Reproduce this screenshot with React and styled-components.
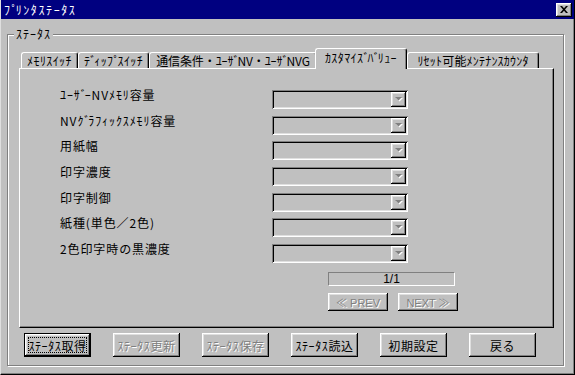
import React from "react";
import styled, { createGlobalStyle, css } from "styled-components";

const Global = createGlobalStyle`
  html, body { margin: 0; padding: 0; background: #c0c0c0; }
  body { font-family: "Noto Sans CJK JP", "Noto Sans", sans-serif; font-size: 12px; color: #000; }
  * { box-sizing: border-box; }
`;

const raised = css`
  box-shadow: inset -1px -1px 0 #000, inset 1px 1px 0 #fff, inset -2px -2px 0 #808080, inset 2px 2px 0 #dfdfdf;
`;

const Window = styled.div`
  width: 575px;
  height: 375px;
  background: #c0c0c0;
  border-left: 1px solid #dfdfdf;
  border-right: 1px solid #000;
  border-bottom: 1px solid #000;
  box-shadow: inset -1px -1px 0 #808080;
  display: flex;
  flex-direction: column;
`;

const TitleBar = styled.div`
  height: 19px;
  background: #000080;
  color: #fff;
  display: flex;
  align-items: center;
  justify-content: space-between;
  padding: 0 2px 0 3px;
  font-size: 12px;
  letter-spacing: 1.6px;
`;

const CloseButton = styled.div`
  width: 16px;
  height: 14px;
  background: #c0c0c0;
  ${raised};
  display: flex;
  align-items: center;
  justify-content: center;
`;

const Client = styled.div`
  flex: 1;
  display: flex;
  padding: 15px 10px 8px 6px;
`;

const GroupBox = styled.div`
  position: relative;
  flex: 1;
  border: 1px solid #808080;
  box-shadow: inset 1px 1px 0 #fff, 1px 1px 0 #fff;
  padding: 13px 9px 7px 11px;
  display: flex;
  flex-direction: column;
`;

const GroupLabel = styled.span`
  position: absolute;
  top: -9px;
  left: 6px;
  padding: 0 2px;
  background: #c0c0c0;
  line-height: 16px;
  letter-spacing: 1px;
`;

const Mark = styled.span`
  letter-spacing: -2px;
`;

const kana = (text) =>
  text.split(/([ﾞﾟ])/).map((part, i) =>
    part === "ﾞ" || part === "ﾟ" ? <Mark key={i}>{part}</Mark> : part
  );

const TabRow = styled.div`
  height: 20px;
  display: flex;
  align-items: flex-end;
  padding-left: 2px;
  position: relative;
  z-index: 1;
`;

const Tab = styled.div`
  width: ${(p) => p.$w}px;
  height: ${(p) => (p.$active ? 21 : 16)}px;
  margin-bottom: ${(p) => (p.$active ? -1 : 0)}px;
  margin-left: ${(p) => (p.$active ? -2 : 0)}px;
  background: #c0c0c0;
  border-top: 1px solid #fff;
  border-left: 1px solid #fff;
  border-right: 1px solid #000;
  border-radius: 3px 3px 0 0;
  box-shadow: inset -1px 0 0 #808080;
  display: flex;
  align-items: ${(p) => (p.$active ? "flex-start" : "center")};
  padding-top: ${(p) => (p.$active ? 2 : 0)}px;
  justify-content: center;
  white-space: nowrap;
  letter-spacing: ${(p) => p.$ls}px;
  line-height: 14px;
`;

const Panel = styled.div`
  height: 260px;
  border: 1px solid;
  border-color: #fff #000 #000 #fff;
  box-shadow: inset -1px -1px 0 #808080;
  padding: 19px 0 0 40px;
`;

const FieldGrid = styled.div`
  display: grid;
  grid-template-columns: 212px 136px;
  grid-auto-rows: 25.67px;
`;

const Label = styled.div`
  line-height: 14px;
  letter-spacing: 0.9px;
  white-space: nowrap;
`;

const Combo = styled.div`
  margin-top: 2px;
  height: 19px;
  background: #c0c0c0;
  box-shadow: inset 1px 1px 0 #808080, inset -1px -1px 0 #fff, inset 2px 2px 0 #000, inset -2px -2px 0 #dfdfdf;
  display: flex;
  justify-content: flex-end;
  padding: 2px;
`;

const ComboArrow = styled.div`
  width: 15px;
  height: 15px;
  ${raised};
  display: flex;
  align-items: center;
  justify-content: center;
`;

const Pager = styled.div`
  margin: 4px 0 0 268px;
  width: 130px;
  display: flex;
  flex-direction: column;
`;

const PageBox = styled.div`
  width: 127px;
  height: 14px;
  border: 1px solid;
  border-color: #808080 #fff #fff #808080;
  display: flex;
  align-items: center;
  justify-content: center;
  line-height: 12px;
  font-size: 12px;
  font-family: "Liberation Sans", "Noto Sans CJK JP", sans-serif;
`;

const PagerButtons = styled.div`
  margin-top: 7px;
  display: flex;
  gap: 10px;
`;

const disabledText = css`
  color: #808080;
  text-shadow: 1px 1px 0 #fff;
`;

const SmallButton = styled.div`
  width: 60px;
  height: 18px;
  ${raised};
  display: flex;
  align-items: center;
  justify-content: center;
  font-family: "Liberation Sans", "Noto Sans CJK JP", sans-serif;
  font-size: 11px;
  ${(p) => p.$disabled && disabledText};
`;

const ButtonRow = styled.div`
  margin-top: 5px;
  padding-left: 5px;
  display: flex;
  gap: 22px;
`;

const Button = styled.div`
  width: 67px;
  height: 24px;
  display: flex;
  align-items: center;
  justify-content: center;
  letter-spacing: 0.6px;
  white-space: nowrap;
  ${raised};
  ${(p) => p.$disabled && disabledText};
  ${(p) =>
    p.$focused &&
    css`
      border: 1px solid #000;
      outline: 1px dotted #000;
      outline-offset: -5px;
    `};
`;

const XIcon = () => (
  <svg width="8" height="7" viewBox="0 0 8 7">
    <path d="M0 0h2l2 2.2L6 0h2L5 3.5 8 7H6L4 4.8 2 7H0l3-3.5z" fill="#000" />
  </svg>
);

const DownArrow = () => (
  <svg width="8" height="5" viewBox="0 0 8 5">
    <path d="M1 1h7L4.5 4.5z" fill="#fff" />
    <path d="M0 0h7L3.5 3.5z" fill="#808080" />
  </svg>
);

const tabs = [
  { label: "ﾒﾓﾘｽｲｯﾁ", w: 57, ls: 0.4 },
  { label: "ﾃﾞｨｯﾌﾟｽｲｯﾁ", w: 71, ls: 0.4 },
  { label: "通信条件・ﾕｰｻﾞNV・ﾕｰｻﾞNVG", w: 168, ls: -0.1 },
  { label: "ｶｽﾀﾏｲｽﾞﾊﾞﾘｭｰ", w: 92, ls: 0.4, active: true },
  { label: "ﾘｾｯﾄ可能ﾒﾝﾃﾅﾝｽｶｳﾝﾀ", w: 132, ls: 0.2 },
];

const fields = [
  "ﾕｰｻﾞｰNVﾒﾓﾘ容量",
  "NVｸﾞﾗﾌｨｯｸｽﾒﾓﾘ容量",
  "用紙幅",
  "印字濃度",
  "印字制御",
  "紙種(単色／2色)",
  "2色印字時の黒濃度",
];

const buttons = [
  { label: "ｽﾃｰﾀｽ取得", focused: true },
  { label: "ｽﾃｰﾀｽ更新", disabled: true },
  { label: "ｽﾃｰﾀｽ保存", disabled: true },
  { label: "ｽﾃｰﾀｽ読込" },
  { label: "初期設定" },
  { label: "戻る" },
];

export default function App() {
  return (
    <>
      <Global />
      <Window>
        <TitleBar>
          <span>{kana("ﾌﾟﾘﾝﾀｽﾃｰﾀｽ")}</span>
          <CloseButton>
            <XIcon />
          </CloseButton>
        </TitleBar>
        <Client>
          <GroupBox>
            <GroupLabel>ｽﾃｰﾀｽ</GroupLabel>
            <TabRow>
              {tabs.map((t) => (
                <Tab key={t.label} $w={t.w} $ls={t.ls} $active={t.active}>
                  <span>{kana(t.label)}</span>
                </Tab>
              ))}
            </TabRow>
            <Panel>
              <FieldGrid>
                {fields.map((f) => (
                  <React.Fragment key={f}>
                    <Label>{kana(f)}</Label>
                    <Combo>
                      <ComboArrow>
                        <DownArrow />
                      </ComboArrow>
                    </Combo>
                  </React.Fragment>
                ))}
              </FieldGrid>
              <Pager>
                <PageBox>1/1</PageBox>
                <PagerButtons>
                  <SmallButton $disabled>≪ PREV</SmallButton>
                  <SmallButton $disabled>NEXT ≫</SmallButton>
                </PagerButtons>
              </Pager>
            </Panel>
            <ButtonRow>
              {buttons.map((b) => (
                <Button key={b.label} $disabled={b.disabled} $focused={b.focused}>
                  {b.label}
                </Button>
              ))}
            </ButtonRow>
          </GroupBox>
        </Client>
      </Window>
    </>
  );
}
